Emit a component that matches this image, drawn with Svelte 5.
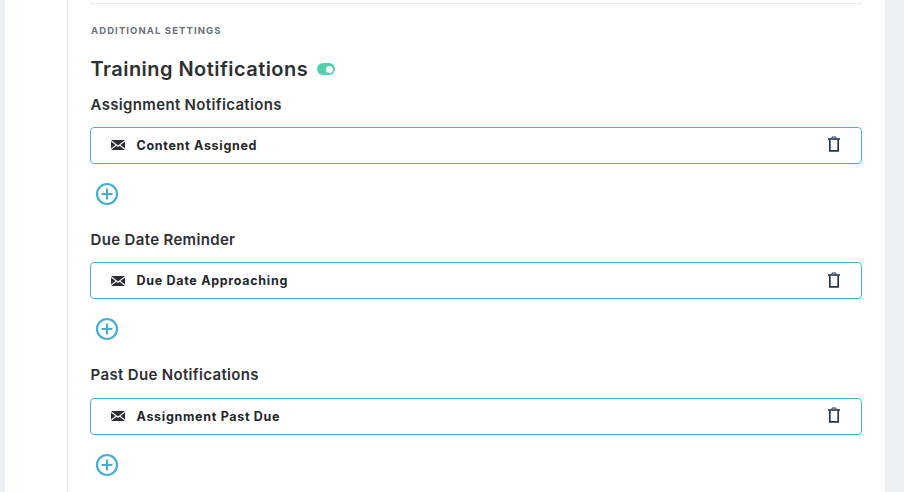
<script>
	const groups = [
		{ title: 'Assignment Notifications', items: ['Content Assigned'] },
		{ title: 'Due Date Reminder', items: ['Due Date Approaching'] },
		{ title: 'Past Due Notifications', items: ['Assignment Past Due'] }
	];
</script>

<div class="page">
	<div class="sheet">
		<div class="rail"></div>
		<main class="content">
			<hr />
			<h4 class="eyebrow">ADDITIONAL SETTINGS</h4>
			<div class="heading">
				<h2>Training Notifications</h2>
				<span class="toggle"></span>
			</div>
			{#each groups as group}
				<section class="group">
					<h3>{group.title}</h3>
					{#each group.items as item}
						<div class="row">
							<svg class="mail" width="14" height="10" viewBox="0 0 14 10">
								<path d="M0 0h14L7 5.4z" fill="#2b2f33" />
								<path d="M0 1.4v7.2L4.6 5zM14 1.4v7.2L9.4 5z" fill="#2b2f33" />
								<path d="M0 10h14L8.5 5.8 7 7 5.5 5.8z" fill="#2b2f33" />
							</svg>
							<span class="label">{item}</span>
							<svg class="trash" width="14" height="16" viewBox="0 0 14 16" fill="none" stroke="#24384c">
								<path d="M1 3h12" stroke-width="1.6" />
								<path d="M5 2.2V1h4v1.2" stroke-width="1" />
								<path d="M2.8 3.5v11.3h8.4V3.5" stroke-width="1.7" />
							</svg>
						</div>
					{/each}
					<button class="add" aria-label="Add notification">
						<svg width="24" height="24" viewBox="0 0 24 24" fill="none" stroke="#45aed3" stroke-width="2.2">
							<circle cx="12" cy="12" r="10" />
							<path d="M12 6.5v11M6.5 12h11" stroke-width="2" />
						</svg>
					</button>
				</section>
			{/each}
		</main>
	</div>
</div>

<style>
	:global(body) {
		margin: 0;
		background: #edf1f4;
		overflow: hidden;
	}

	.page {
		height: 492px;
		padding: 0 19px 0 5px;
		overflow: hidden;
	}

	.sheet {
		display: flex;
		height: 100%;
		background: #fff;
		font-family: Inter, "Liberation Sans", sans-serif;
		color: #2d3033;
	}

	.rail {
		width: 62px;
		border-right: 1px solid #e6ebef;
	}

	.content {
		width: 772px;
		margin-left: 22px;
	}

	hr {
		margin: 3px 0 0;
		border: 0;
		border-top: 1px solid #e6ebef;
	}

	.eyebrow {
		margin: 21px 0 0;
		padding-left: 1px;
		font-size: 9.5px;
		line-height: 12px;
		font-weight: 700;
		letter-spacing: 1.1px;
		color: #6b7178;
	}

	.heading {
		display: flex;
		align-items: center;
		gap: 8.5px;
		margin-top: 19px;
		padding-left: 0.6px;
		height: 26px;
	}

	h2 {
		margin: 0;
		font-size: 20px;
		line-height: 26px;
		font-weight: 600;
		letter-spacing: 0.45px;
	}

	.toggle {
		position: relative;
		width: 18px;
		height: 12px;
		border-radius: 6px;
		background: #4fd1ac;
	}

	.toggle::after {
		content: '';
		position: absolute;
		right: 2px;
		top: 2.5px;
		width: 7px;
		height: 7px;
		border-radius: 50%;
		background: #fff;
	}

	.group {
		height: 135.4px;
	}

	h3 {
		margin: 0;
		padding: 12.6px 0 0 0.6px;
		font-size: 15px;
		line-height: 20px;
		font-weight: 600;
		letter-spacing: 0.33px;
	}

	.row {
		display: flex;
		align-items: center;
		box-sizing: border-box;
		height: 37px;
		margin-top: 12.4px;
		padding: 0 21px 0 20px;
		border: 1px solid #4fb0d6;
		border-radius: 4px;
	}

	.label {
		margin-left: 11.5px;
		font-size: 12.5px;
		font-weight: 700;
		letter-spacing: 0.7px;
		color: #22262a;
	}

	.trash {
		margin: -2px -1px 0 auto;
	}

	.add {
		display: block;
		margin: 18px 0 0 5px;
		padding: 0;
		border: 0;
		background: none;
		height: 24px;
	}
</style>
